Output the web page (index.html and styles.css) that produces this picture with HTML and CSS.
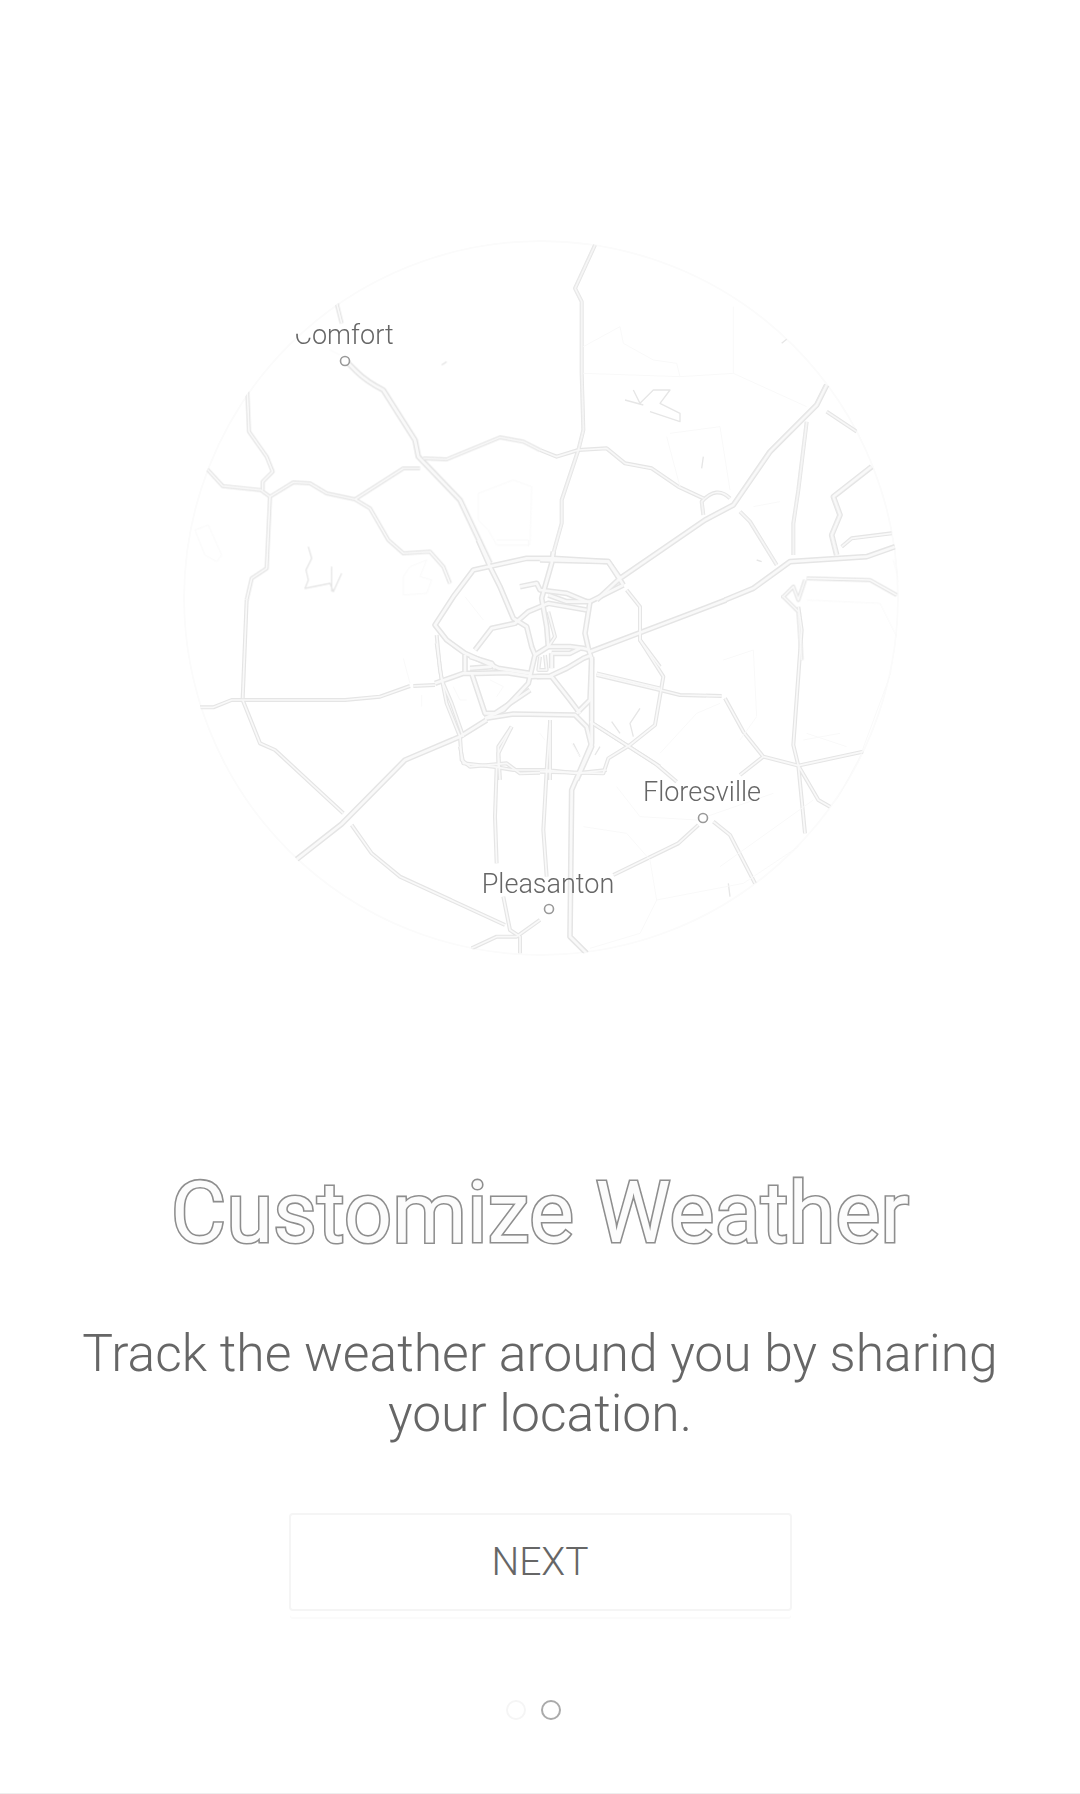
FILE: index.html
```html
<!DOCTYPE html>
<html lang="en">
<head>
<meta charset="utf-8">
<title>Customize Weather</title>
<link rel="stylesheet" href="styles.css">
</head>
<body>
<main class="screen">
  <div class="map">
    <svg class="map-art" viewBox="180 236 720 724" aria-hidden="true">
      <defs>
        <clipPath id="disc"><circle cx="541" cy="598" r="358"/></clipPath>
        <g id="roads">
          <g transform="translate(170 230) scale(.33333)">
            <path class="maj" d="M525 390L560 425Q590 455 640 480L735 630L745 680L870 810L960 1000"/>
            <path class="min" d="M232 485L237 605L290 680L308 725L278 755L278 780"/>
            <path class="min" d="M112 718L158 768L272 780L300 800L370 757L420 760L470 790L555 808L600 835L655 930L700 970L780 965L820 1010L840 1060"/>
            <path class="min" d="M555 808L700 715L750 715"/>
            <path class="min" d="M760 685L830 688L990 622L1060 635L1110 660"/>
            <path class="min" d="M300 800L290 1015L245 1045L230 1110"/>
            <path class="min" d="M500 220L515 280"/>
            <path class="mark" d="M415 950L425 985L408 1020L415 1050L405 1075L480 1060L490 1085L515 1030M485 1010V1085"/>
            <path class="faint" d="M75 900L115 885L155 975L140 995L105 975ZM925 790L1030 750L1085 770L1080 945L980 945L955 900L925 870ZM720 1010L770 990L750 1040L785 1050L770 1090L700 1095L700 1040Z"/>
            <path class="mark" d="M815 405L830 395"/>
            <path class="faint" d="M480 360L510 375"/>
          </g>
          <g transform="translate(540 230) scale(.33333)">
            <path class="min" d="M165 45L105 175L125 215L125 430L130 600L115 660L65 810L65 880L40 970"/>
            <path class="min" d="M0 660L50 680L115 660L200 655L255 700L335 715L415 770L490 805"/>
            <path class="maj" d="M860 465L830 525L690 665L580 825L495 870L240 1045L170 1110"/>
            <path class="min" d="M490 855L485 815Q530 765 570 805"/>
            <path class="min" d="M600 845L630 875L710 1005"/>
            <path class="min" d="M800 575L775 780L760 880L760 975"/>
            <path class="maj" d="M995 710L880 800L900 855L875 915L890 975"/>
            <path class="maj" d="M1065 950L980 980L750 995L640 1075L555 1110"/>
            <path class="min" d="M1055 910L935 925L905 950"/>
            <path class="min" d="M860 545L950 605"/>
            <path class="maj" d="M0 990L205 995L240 1045"/>
            <path class="faint" d="M130 430L420 440L580 430V230M420 440L410 400L340 390L250 340L240 290L130 350M580 430L800 530"/>
            <path class="mark" d="M280 480L300 520L340 480L390 480L360 520L420 550V575L330 545M255 510L310 525M490 680L485 715M725 340L740 328M650 990L665 995"/>
            <path class="faint" d="M380 620L420 770M390 610L540 590L570 780M640 830L720 815"/>
          </g>
          <g transform="translate(170 600) scale(.33333)">
            <path class="min" d="M230 0L218 295"/>
            <path class="min" d="M90 322L130 322L185 300L218 300L525 300L630 290L720 258M730 258L795 255"/>
            <path class="maj" d="M380 778L515 672L705 480L870 410L950 360"/>
            <path class="min" d="M218 300L270 430L315 450L520 640M545 675L605 760L690 830L1005 975"/>
            <path class="min" d="M980 500L975 650L980 790M1000 890L1020 990L1050 1010V1060M905 1045L980 1010L1040 1010L1110 960"/>
            <path class="min" d="M800 105L810 210L830 310L870 410L875 480L900 500L1010 490L1050 520L1110 518M985 500V440L1025 380"/>
            <path class="faint" d="M700 175L720 250M755 285V320M850 260L870 300H890"/>
          </g>
          <g transform="translate(540 600) scale(.33333)">
            <path class="maj" d="M150 155L558 0"/>
            <path class="min" d="M170 225L360 270L420 285L545 288"/>
            <path class="min" d="M300 20V120L370 230L345 375L270 435L205 475L190 520L0 515"/>
            <path class="min" d="M150 365L345 490L410 545"/>
            <path class="min" d="M555 295L610 395L670 470L775 497L970 455M670 470L600 525"/>
            <path class="min" d="M775 20L785 90L760 435L775 497L795 700M775 497L835 600L870 620"/>
            <path class="min" d="M220 825L415 730L475 675M520 665L570 705L645 850"/>
            <path class="maj" d="M155 170V430L95 570L90 1010L140 1060"/>
            <path class="min" d="M30 370L20 510L10 690L20 830"/>
            <path class="mark" d="M300 325L270 370L280 410M215 365L240 400M100 430L120 470M180 440L165 465M565 850L570 890"/>
            <path class="faint" d="M130 680L260 700L330 780L350 900L300 1000L150 1045M350 900L610 850L790 730L880 620L960 470L1060 200L1090 60M540 800L820 600M230 560L300 650L470 660L700 580M550 180L640 150L650 350L600 420M360 460L470 340L540 310M800 400L920 440M790 420L900 400"/>
          </g>
          <g transform="translate(760 500) scale(.33333)">
            <path class="min" d="M140 235L330 240L410 285"/>
            <path class="min" d="M135 240L115 300L100 260L70 290L115 335L125 480"/>
            <path class="faint" d="M140 300L360 310L420 430M400 180L430 290"/>
          </g>
          <g transform="translate(420 540) scale(.33333)">
            <path class="maj" d="M610 135L565 65L400 55L320 55L160 90L100 170L45 255L80 300L135 340L235 385L330 400"/>
            <path class="maj" d="M175 0L210 80L240 140L280 235L320 260L335 320L345 345L325 430L250 510L195 535"/>
            <path class="maj" d="M45 430L130 400L175 400L260 398L335 410L390 408L440 385L490 355L515 345"/>
            <path class="maj" d="M400 35L395 70L365 175L380 260L385 320L345 345"/>
            <path class="maj" d="M300 140L350 130L360 150L440 160L500 185"/>
            <path class="maj" d="M385 165L440 185L510 185L610 135"/>
            <path class="maj" d="M510 185L495 280L505 325L515 360L510 480L470 520"/>
            <path class="maj" d="M165 330L215 265L285 250L325 215L385 190L500 210"/>
            <path class="maj" d="M385 320H450L490 325L510 330"/>
            <path class="maj" d="M135 345V395M150 350L215 370L225 385M150 385L215 380"/>
            <path class="maj" d="M395 340V385M395 340H450L480 325"/>
            <path class="min" d="M360 350L355 390H380L375 345"/>
            <path class="maj" d="M155 400L195 520H225L330 450"/>
            <path class="maj" d="M195 535L280 522L465 525L500 560L515 620L470 720"/>
            <path class="maj" d="M350 410H395L450 480L480 520"/>
            <path class="min" d="M385 215L405 290L385 320"/>
            <path class="min" d="M50 310L65 420L95 490L130 590M120 620L130 670L220 680L280 690H380L470 700L560 690M240 720L235 640L275 560M390 540V720M530 400L720 445M510 545L720 680M620 150L660 200V300L720 380"/>
            <path class="faint" d="M135 170L190 240M210 420L250 440L230 470M230 0H325V20M455 610L480 650M360 580L375 600"/>
          </g>
        </g>
      </defs>
      <g clip-path="url(#disc)">
        <circle class="rim" cx="541" cy="598" r="357"/>
        <g class="soft">
          <use href="#roads" class="edge"/>
          <use href="#roads" class="core"/>
        </g>
      </g>
      <circle class="pin" cx="345" cy="361" r="4.5"/>
      <circle class="pin" cx="703" cy="818" r="4.5"/>
      <circle class="pin" cx="549" cy="909" r="4.5"/>
    </svg>
    <span class="place place-comfort"><span class="cut">C</span>omfort</span>
    <span class="place place-floresville">Floresville</span>
    <span class="place place-pleasanton">Pleasanton</span>
  </div>
  <h1 class="title">Customize Weather</h1>
  <p class="lede">Track the weather around you by sharing your location.</p>
  <button class="next" type="button">NEXT</button>
  <div class="dots">
    <span class="dot dot-off"></span>
    <span class="dot dot-on"></span>
  </div>
</main>
</body>
</html>
```

FILE: styles.css
```css
* { box-sizing: border-box; }
html, body { margin: 0; background: #fff; }
.screen {
  width: 1080px;
  height: 1794px;
  display: flex;
  flex-direction: column;
  align-items: center;
  padding-top: 236px;
  border-bottom: 1px solid #eee;
  font-family: Roboto, "Liberation Sans", sans-serif;
  overflow: hidden;
}
.map { position: relative; width: 720px; height: 724px; flex: none; }
.map-art { display: block; width: 720px; height: 724px; fill: none; }
.map-art path { fill: none; stroke-linejoin: round; stroke-linecap: butt; }
.rim { fill: none; stroke: #fbfbfb; stroke-width: 2; }
.soft { filter: blur(.45px); }
.edge { stroke: #e5e5e5; --maj: 17; --min: 12; --faint: 3; --faint-c: #f9f9f9; --mark: 4; --mark-c: #e6e6e6; }
.core { stroke: #f9f9f9; --maj: 8; --min: 5; --faint: 0; --faint-c: transparent; --mark: 0; --mark-c: transparent; }
.maj { stroke-width: var(--maj); }
.min { stroke-width: var(--min); }
.faint { stroke-width: var(--faint); stroke: var(--faint-c); }
.mark { stroke-width: var(--mark); stroke: var(--mark-c); }
.pin { fill: #fff; stroke: #999; stroke-width: 1.6; }
.place {
  position: absolute;
  font-weight: 300;
  font-size: 27px;
  line-height: 32px;
  color: #666;
  white-space: nowrap;
  transform: translateX(-50%);
}
.place-comfort { left: 164px; top: 83px; }
.place-floresville { left: 522px; top: 540px; }
.place-pleasanton { left: 368px; top: 632px; }
.cut { display: inline-block; clip-path: inset(46% 0 0 0); }
.title {
  margin: 205px 0 0;
  font-size: 85px;
  line-height: 96px;
  font-weight: 400;
  color: #fcfcfc;
  -webkit-text-stroke: 3.2px #8e8e8e;
  paint-order: stroke fill;
  white-space: nowrap;
}
.lede {
  margin: 63px 0 0;
  width: 960px;
  font-size: 51.6px;
  line-height: 60px;
  font-weight: 300;
  color: #666;
  text-align: center;
}
.next {
  margin-top: 69px;
  width: 503px;
  height: 98px;
  background: #fff;
  border: 2px solid #f5f5f5;
  border-radius: 4px;
  box-shadow: 0 7px 0 -1px #fff, 0 9px 0 -1px #fbfbfb;
  font-family: inherit;
  font-size: 39px;
  font-weight: 300;
  color: #666;
}
.dots { margin-top: 89px; display: flex; gap: 15px; transform: translateX(-7px); }
.dot { width: 20px; height: 20px; border-radius: 50%; }
.dot-off { border: 2px solid #f5f5f5; }
.dot-on { border: 2.5px solid #aaa; }
```
